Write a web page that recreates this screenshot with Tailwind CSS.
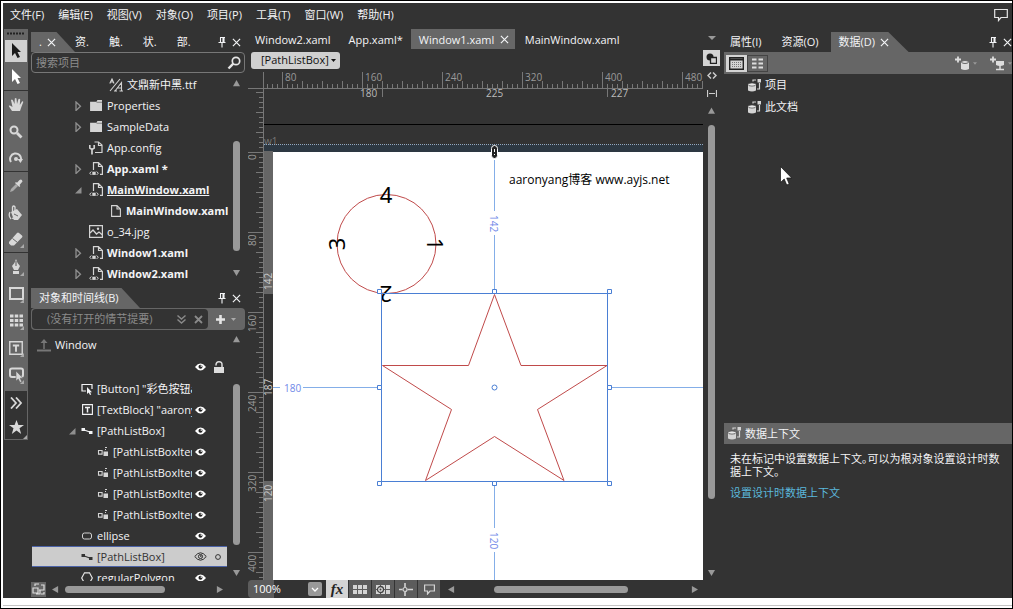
<!DOCTYPE html>
<html lang="zh-CN">
<head>
<meta charset="utf-8">
<title>Blend</title>
<script src="https://cdn.jsdelivr.net/npm/@tailwindcss/browser@4"></script>
</head>
<body class="h-screen overflow-hidden bg-black p-px font-['Open_Sans','Noto_Sans_CJK_SC',sans-serif] text-[11px] leading-4 text-gray-100">
<svg width="0" height="0" class="absolute" aria-hidden="true">
  <defs>
    <symbol id="x" viewBox="0 0 10 10"><path d="M1 1l8 8M9 1l-8 8" fill="none" stroke="currentColor" stroke-width="1.3"/></symbol>
    <symbol id="pin" viewBox="0 0 10 12"><path d="M3 1.5h5M3.5 1.5v5M7 1.5v5M6 1.5v5M1.5 6.5h7M5 6.5v5" fill="none" stroke="currentColor" stroke-width="1.1"/></symbol>
    <symbol id="up" viewBox="0 0 8 8"><path d="M4 0l4 7H0z" fill="currentColor"/></symbol>
    <symbol id="down" viewBox="0 0 8 8"><path d="M4 8l4-7H0z" fill="currentColor"/></symbol>
    <symbol id="left" viewBox="0 0 8 8"><path d="M0 4l7-4v8z" fill="currentColor"/></symbol>
    <symbol id="right" viewBox="0 0 8 8"><path d="M8 4L1 0v8z" fill="currentColor"/></symbol>
    <symbol id="closed" viewBox="0 0 8 10"><path d="M2 1v8.500L6.500 5.200z" fill="none" stroke="#8f8f8f" stroke-width="1.300"/></symbol>
    <symbol id="open" viewBox="0 0 8 8"><path d="M7.500 1v6.500H1z" fill="#8f8f8f"/></symbol>
    <symbol id="folder" viewBox="0 0 14 12"><path d="M0 2h7l1-2h5v12H0z" fill="#d4d4d4"/><path d="M7 2.5h6" stroke="#777"/></symbol>
    <symbol id="xaml" viewBox="0 0 14 14"><path d="M4.500 8V.6h5l3.900 3.900v7.900H11M9.500.600v3.900h3.900" fill="none" stroke="#d4d4d4" stroke-width="1.200"/><path d="M2.300 9.500L.7 11.200l1.600 1.700M7.700 9.500l1.600 1.700-1.600 1.700" fill="none" stroke="#d4d4d4"/><path d="M3.300 9.700h3.400v3.200H3.300z" fill="#d4d4d4"/></symbol>
    <symbol id="config" viewBox="0 0 14 14"><path d="M5.500 1h4l3.500 3v7.500H6M9.500 1v3.500H13" fill="none" stroke="#d4d4d4" stroke-width="1.2"/><path d="M.8 4v3l2.200 1.500L5.200 7V4M3 8v5.500" fill="none" stroke="#d4d4d4" stroke-width="1.7"/></symbol>
    <symbol id="page" viewBox="0 0 10 12"><path d="M.6.600h5.400l3.400 3.400v7.400H.6zM6 .6V4h3.400" fill="none" stroke="#d4d4d4" stroke-width="1.1"/></symbol>
    <symbol id="image" viewBox="0 0 14 13"><path d="M.6.600h12.800v11.800H.6z" fill="none" stroke="#d4d4d4" stroke-width="1.2"/><path d="M1 8l3-3 3.500 4L10 7l3.500 3" fill="none" stroke="#d4d4d4" stroke-width="1.3"/><circle cx="9" cy="3.800" r="1.200" fill="#d4d4d4"/></symbol>
    <symbol id="fontfile" viewBox="0 0 15 14"><path d="M1 13L11 1M.8 5.500L3 1l2 4.500M1.500 4h3M6 13l6.500-8.500V13M8 10h4.500M5 13h3M10.500 13H14" fill="none" stroke="#d4d4d4" stroke-width="1.1"/></symbol>
    <symbol id="eye" viewBox="0 0 12 8"><path d="M0 4Q6-3.500 12 4 6 11.500 0 4z" fill="#fff"/><circle cx="6" cy="3.800" r="2.200" fill="#222"/><circle cx="6.800" cy="3" r=".9" fill="#fff"/></symbol>
    <symbol id="eyeline" viewBox="0 0 14 9"><path d="M.8 4.500Q7-3.500 13.200 4.500 7 12.500.8 4.500z" fill="none" stroke="#222"/><circle cx="7" cy="4.500" r="2.200" fill="none" stroke="#222"/><circle cx="7.300" cy="4" r=".9" fill="#222"/></symbol>
    <symbol id="pathlist" viewBox="0 0 12 8"><path d="M2 2.500l8 3" stroke="currentColor" stroke-width="1.200"/><path d="M.5 1h3.500v3H.5zM8 4h3.500v3H8z" fill="currentColor"/></symbol>
    <symbol id="pathitem" viewBox="0 0 12 12"><path d="M1.500 4.500h3.600v3.600H1.500z" fill="none" stroke="#d4d4d4" stroke-width="1.100"/><path d="M6.500 5.500H11V10H6.500z" fill="#d4d4d4"/><path d="M8 1.500h2M8 3.500h1" stroke="#d4d4d4"/></symbol>
    <symbol id="btn" viewBox="0 0 12 12"><path d="M5 8H1V1.500h10V6" fill="none" stroke="currentColor" stroke-width="1.200"/><path d="M6 4v7l1.700-1.500L9 12l1.200-.6-1.100-2.200H11z" fill="currentColor"/></symbol>
    <symbol id="tb" viewBox="0 0 11 11"><path d="M.6.600h9.800v9.800H.6z" fill="none" stroke="currentColor" stroke-width="1.100"/><path d="M3 3.500h5M5.500 3.500v5" stroke="currentColor" stroke-width="1.500"/></symbol>
    <symbol id="db" viewBox="0 0 15 15"><path d="M1 6.500v6q4 2 8 0v-6z" fill="#d4d4d4"/><ellipse cx="5" cy="6.500" rx="4" ry="1.600" fill="#e8e8e8" stroke="#444" stroke-width=".7"/><path d="M6 3.500V2h3M12.500 5v6H10" fill="none" stroke="#d4d4d4" stroke-width="1.200"/><path d="M10.500 1H14v3.500h-3.500z" fill="#d4d4d4"/></symbol>
    <symbol id="corner" viewBox="0 0 4 4"><path d="M4 0v4H0z" fill="#aaa"/></symbol>
    <pattern id="ticks" x="14" y="0" width="20" height="20" patternUnits="userSpaceOnUse"><path d="M.5 11v7M5.500 14v4M10.500 14v4M15.500 14v4" stroke="#777"/></pattern>
    <pattern id="vticks" x="0" y="2" width="20" height="20" patternUnits="userSpaceOnUse"><path d="M8 .5h7M11 5.500h4M11 10.500h4M11 15.500h4" stroke="#777"/></pattern>
  </defs>
</svg>

<div class="flex h-full flex-col bg-white pl-[2px] pt-[2px]">
  <div class="flex min-h-0 flex-1 flex-col bg-[#333]">
    <header class="flex h-[26px] shrink-0 items-center justify-between pb-[2px] pl-[7px] pr-1">
      <nav class="flex gap-[14px] whitespace-nowrap" aria-label="主菜单">
        <button>文件(F)</button><button>编辑(E)</button><button>视图(V)</button><button>对象(O)</button><button>项目(P)</button><button>工具(T)</button><button>窗口(W)</button><button>帮助(H)</button>
      </nav>
      <button aria-label="反馈"><svg class="h-[14px] w-[14px]" viewBox="0 0 14 14"><path d="M.7 1.500h12.600v8H7l-2.500 3v-3H.7z" fill="none" stroke="#e5e5e5" stroke-width="1.200"/></svg></button>
    </header>

    <div class="flex min-h-0 flex-1">
      <!-- tools -->
      <aside class="ml-px mr-[3px] flex w-6 shrink-0 flex-col" aria-label="工具">
        <div class="flex h-2 items-center justify-center bg-[#666]"><svg class="h-[3px] w-[18px]" viewBox="0 0 18 3"><path d="M0 1.500h18" stroke="#222" stroke-width="2" stroke-dasharray="2 1"/></svg></div>
        <div class="flex flex-col bg-[#666] pb-[2px] text-[#d8d8d8] *:relative *:flex *:h-[27px] *:items-center *:justify-center">
          <button aria-label="选择"><span class="flex h-[22px] w-[22px] items-center justify-center bg-[#d0d0d0]"><svg class="h-4 w-3" viewBox="0 0 12 16"><path d="M2 0v13l3-3 2.500 5L10 14 7.500 9H11z" fill="#1a1a1a"/></svg></span></button>
          <button aria-label="直接选择" class="border-b border-[#333]"><svg class="h-4 w-3" viewBox="0 0 12 16"><path d="M2 0v13l3-3 2.500 5L10 14 7.500 9H11z" fill="#fff"/></svg></button>
          <button aria-label="平移"><svg class="h-[15px] w-4" viewBox="0 0 16 15"><path d="M4 14L1 9.500Q.3 8 2 8.500L4.500 10 3 3q1-1 2 .5L6.500 7 6.800 1.500q1-1 1.700 0L9 7l1.500-5q1-.6 1.700.3L11.800 8 14 4.500q1-.5 1.300.5L13 11l-1 3z" fill="currentColor"/></svg></button>
          <button aria-label="缩放"><svg class="h-[14px] w-[14px]" viewBox="0 0 14 14"><circle cx="5" cy="5" r="3.500" fill="none" stroke="currentColor" stroke-width="2"/><path d="M8 8l4.500 4.500" stroke="currentColor" stroke-width="2.800"/></svg></button>
          <button aria-label="旋转视图" class="border-b border-[#333]"><svg class="h-[14px] w-[14px]" viewBox="0 0 14 14"><path d="M2 11A5.500 5.500 0 1 1 12 9" fill="none" stroke="currentColor" stroke-width="2"/><path d="M8.500 8H14l-2.500 4z" fill="currentColor"/><circle cx="7" cy="8" r="2" fill="currentColor"/></svg></button>
          <button aria-label="吸管"><svg class="h-[14px] w-[14px]" viewBox="0 0 14 14"><path d="M1 13l1-3 5-5 2 2-5 5z" fill="#aaa"/><path d="M6 4l1-1 1 .8L10.500 1Q13-.3 13.500 2.500L10.500 6l.8 1-1 1z" fill="currentColor"/></svg></button>
          <button aria-label="油漆桶"><svg class="h-4 w-4" viewBox="0 0 16 16"><path d="M3 7l6-3 5 6-4 5H6z" fill="currentColor"/><path d="M7 7V2q-1.500-2-2.500 0v5M2 7q-2 4 1 7M4 13q4 2 7-1" fill="none" stroke="currentColor" stroke-width="1.300"/><path d="M6 9l4 2" stroke="#666"/></svg></button>
          <button aria-label="橡皮擦" class="border-b border-[#333]"><svg class="h-4 w-4" viewBox="0 0 16 16"><path d="M1 11l8-9q1-1 2 0l3 2.500q1 1 0 2L6 14.500H3L1 12.500z" fill="currentColor"/><path d="M4.500 7.500l5 4" stroke="#666"/></svg><svg class="absolute bottom-1 right-1 h-1 w-1"><use href="#corner"/></svg></button>
          <button aria-label="钢笔"><svg class="h-[15px] w-[12px]" viewBox="0 0 12 15"><path d="M6 0q1 4 4 7l-2 4H4L2 7Q5 4 6 0z" fill="currentColor"/><path d="M6 2v5" stroke="#555"/><path d="M3 12h6v3H3z" fill="currentColor"/></svg><svg class="absolute bottom-1 right-1 h-1 w-1"><use href="#corner"/></svg></button>
          <button aria-label="矩形"><svg class="h-[13px] w-[15px]" viewBox="0 0 15 13"><path d="M1 1h13v11H1z" fill="none" stroke="currentColor" stroke-width="2"/></svg><svg class="absolute bottom-1 right-1 h-1 w-1"><use href="#corner"/></svg></button>
          <button aria-label="网格"><svg class="h-[13px] w-[13px]" viewBox="0 0 13 13"><path d="M0 2h13M0 6.500h13M0 11h13" stroke="currentColor" stroke-width="3" stroke-dasharray="3.500 1.250"/></svg><svg class="absolute bottom-1 right-1 h-1 w-1"><use href="#corner"/></svg></button>
          <button aria-label="文本"><svg class="h-[14px] w-[14px]"><use href="#tb"/></svg><svg class="absolute bottom-1 right-1 h-1 w-1"><use href="#corner"/></svg></button>
          <button aria-label="按钮"><svg class="h-[16px] w-[15px]" viewBox="0 0 15 16"><rect x="1" y="1.500" width="13" height="8.500" rx="2" fill="none" stroke="currentColor" stroke-width="2"/><path d="M7 4v10l2.300-2 1.700 3.500 1.800-.8-1.600-3.500H14z" fill="currentColor" stroke="#666" stroke-width=".6"/></svg><svg class="absolute bottom-1 right-1 h-1 w-1"><use href="#corner"/></svg></button>
        </div>
        <div class="flex flex-col border border-[#666] text-[#d8d8d8] *:relative *:flex *:h-[24px] *:items-center *:justify-center">
          <button aria-label="资产"><svg class="h-3 w-3" viewBox="0 0 12 12"><path d="M1 .5L6 6l-5 5.500M6 .5L11 6l-5 5.500" fill="none" stroke="currentColor" stroke-width="1.800"/></svg></button>
          <button aria-label="收藏"><svg class="h-[14px] w-[15px]" viewBox="0 0 15 14"><path d="M7.500 0l1.900 5H15l-4.500 3.300L12.200 14 7.500 10.600 2.800 14l1.700-5.700L0 5h5.600z" fill="currentColor"/></svg><svg class="absolute bottom-0 right-0 h-1 w-1"><use href="#corner"/></svg></button>
        </div>
      </aside>

      <!-- projects and objects -->
      <section class="flex w-[214px] shrink-0 flex-col">
        <div class="flex h-[23px] items-end justify-between pr-1">
          <div class="flex h-5 items-center">
            <div class="flex h-5 w-[44px] items-center gap-[5px] bg-[#666] pl-2 [clip-path:polygon(0_0,58%_0,100%_100%,0_100%)]"><button>.</button><button aria-label="关闭"><svg class="h-[9px] w-[9px]"><use href="#x"/></svg></button></div>
            <div class="flex gap-5"><button>资.</button><button>触.</button><button>状.</button><button>部.</button></div>
          </div>
          <div class="flex h-5 items-center gap-[5px]"><button aria-label="固定"><svg class="h-3 w-[10px]"><use href="#pin"/></svg></button><button aria-label="关闭面板"><svg class="h-[9px] w-[9px]"><use href="#x"/></svg></button></div>
        </div>
        <label class="flex h-[21px] items-center rounded-sm border border-[#777] px-1 pr-[3px]">
          <input type="text" aria-label="搜索项目" placeholder="搜索项目" class="min-w-0 flex-1 bg-transparent outline-none placeholder:text-[#8c8c8c]">
          <svg class="h-[14px] w-[14px]" viewBox="0 0 14 14"><circle cx="9" cy="5" r="3.700" fill="none" stroke="#e5e5e5" stroke-width="1.700"/><path d="M6.300 7.700L1.500 12.500" stroke="#e5e5e5" stroke-width="2.400"/></svg>
        </label>
        <div class="flex pt-px">
          <ul class="min-w-0 flex-1 whitespace-nowrap *:flex *:h-[21px] *:items-center">
            <li class="pl-[78px]"><svg class="mr-[3px] h-[14px] w-[15px] shrink-0"><use href="#fontfile"/></svg>文鼎新中黑.ttf</li>
            <li class="pl-[43px]"><svg class="mr-2 h-[10px] w-2 shrink-0"><use href="#closed"/></svg><svg class="mr-1 h-[11px] w-[13px] shrink-0"><use href="#folder"/></svg>Properties</li>
            <li class="pl-[43px]"><svg class="mr-2 h-[10px] w-2 shrink-0"><use href="#closed"/></svg><svg class="mr-1 h-[11px] w-[13px] shrink-0"><use href="#folder"/></svg>SampleData</li>
            <li class="pl-[58px]"><svg class="mr-1 h-[14px] w-[14px] shrink-0"><use href="#config"/></svg>App.config</li>
            <li class="pl-[43px] font-bold"><svg class="mr-[7px] h-[10px] w-2 shrink-0"><use href="#closed"/></svg><svg class="mr-1 h-[14px] w-[14px] shrink-0"><use href="#xaml"/></svg>App.xaml *</li>
            <li class="pl-[43px] font-bold"><svg class="mr-[7px] h-2 w-2 shrink-0"><use href="#open"/></svg><svg class="mr-1 h-[14px] w-[14px] shrink-0"><use href="#xaml"/></svg><span class="underline">MainWindow.xaml</span></li>
            <li class="pl-[80px] font-bold"><svg class="mr-[5px] h-3 w-[10px] shrink-0"><use href="#page"/></svg>MainWindow.xaml</li>
            <li class="pl-[58px]"><svg class="mr-1 h-[13px] w-[14px] shrink-0"><use href="#image"/></svg>o_34.jpg</li>
            <li class="pl-[43px] font-bold"><svg class="mr-[7px] h-[10px] w-2 shrink-0"><use href="#closed"/></svg><svg class="mr-1 h-[14px] w-[14px] shrink-0"><use href="#xaml"/></svg>Window1.xaml</li>
            <li class="pl-[43px] font-bold"><svg class="mr-[7px] h-[10px] w-2 shrink-0"><use href="#closed"/></svg><svg class="mr-1 h-[14px] w-[14px] shrink-0"><use href="#xaml"/></svg>Window2.xaml</li>
          </ul>
          <div class="flex w-[17px] flex-col items-center pb-2 pt-[6px] text-[#999]">
            <svg class="h-[7px] w-[7px]"><use href="#up"/></svg>
            <div class="mt-[54px] h-[110px] w-[7px] rounded-full bg-[#999]"></div>
            <svg class="mt-auto h-[7px] w-[7px]"><use href="#down"/></svg>
          </div>
        </div>

        <div class="mt-1 flex h-5 shrink-0 items-center justify-between pr-1">
          <button class="h-5 w-[109px] bg-[#666] pl-2 text-left [clip-path:polygon(0_0,83%_0,100%_100%,0_100%)]">对象和时间线(B)</button>
          <div class="flex items-center gap-[5px]"><button aria-label="固定"><svg class="h-3 w-[10px]"><use href="#pin"/></svg></button><button aria-label="关闭面板"><svg class="h-[9px] w-[9px]"><use href="#x"/></svg></button></div>
        </div>
        <div class="flex h-[22px] shrink-0 items-stretch rounded-sm bg-[#666] p-px text-[#8a8a8a]">
          <div class="flex flex-1 items-center rounded-sm bg-[#333] pl-[15px]">
            <span class="flex-1">(没有打开的情节提要)</span>
            <button aria-label="展开"><svg class="mr-2 h-[9px] w-[9px]" viewBox="0 0 9 9"><path d="M.5.500l4 3.500 4-3.500M.5 4.500l4 3.500 4-3.500" fill="none" stroke="currentColor" stroke-width="1.400"/></svg></button>
            <button aria-label="关闭情节提要"><svg class="mr-[5px] h-[9px] w-[9px]" viewBox="0 0 9 9"><path d="M1 1l7 7M8 1L1 8" stroke="currentColor" stroke-width="1.800"/></svg></button>
          </div>
          <button aria-label="新建" class="flex w-9 items-center justify-center gap-[6px]"><svg class="h-[9px] w-[9px]" viewBox="0 0 9 9"><path d="M4.500 0v9M0 4.500h9" stroke="#e5e5e5" stroke-width="2.600"/></svg><svg class="h-[3px] w-[5px]" viewBox="0 0 5 3"><path d="M0 0h5L2.500 3z" fill="#aaa"/></svg></button>
        </div>

        <div class="flex min-h-0 flex-1">
          <div class="min-w-0 flex-1 overflow-hidden">
            <div class="flex h-[26px] items-center gap-1 pl-[6px] pt-1"><svg class="h-[13px] w-[14px]" viewBox="0 0 14 13"><path d="M0 11.500h14" stroke="#777" stroke-width="2"/><path d="M7 10V3" stroke="#777" stroke-width="1.500"/><path d="M7 0L3.500 4h7z" fill="#777"/></svg>Window</div>
            <div class="flex h-[22px] items-center justify-end gap-2 pr-[3px]"><svg class="h-2 w-[11px]"><use href="#eye"/></svg><svg class="h-3 w-[10px]" viewBox="0 0 10 12"><path d="M0 6h10v6H0z" fill="#ddd"/><path d="M2 4.500Q1.800.8 5 .8T8 4v2" fill="none" stroke="#ddd" stroke-width="1.500"/></svg></div>
            <ul class="whitespace-nowrap *:flex *:h-[21px] *:items-center">
              <li class="pl-[50px]"><svg class="mr-1 h-3 w-3 shrink-0"><use href="#btn"/></svg><span class="w-[95px] overflow-hidden">[Button] "彩色按钮a</span></li>
              <li class="pl-[51px]"><svg class="mr-1 h-[11px] w-[11px] shrink-0"><use href="#tb"/></svg><span class="mr-[3px] w-[95px] overflow-hidden">[TextBlock] "aarony</span><svg class="h-2 w-[11px] shrink-0"><use href="#eye"/></svg></li>
              <li class="pl-[37px]"><svg class="mr-[5px] h-2 w-2 shrink-0"><use href="#open"/></svg><svg class="mr-1 h-2 w-3 shrink-0"><use href="#pathlist"/></svg><span class="mr-[3px] w-[95px] overflow-hidden">[PathListBox]</span><svg class="h-2 w-[11px] shrink-0"><use href="#eye"/></svg></li>
              <li class="pl-[66px]"><svg class="mr-1 h-3 w-3 shrink-0"><use href="#pathitem"/></svg><span class="mr-[3px] w-[79px] overflow-hidden">[PathListBoxItem]</span><svg class="h-2 w-[11px] shrink-0"><use href="#eye"/></svg></li>
              <li class="pl-[66px]"><svg class="mr-1 h-3 w-3 shrink-0"><use href="#pathitem"/></svg><span class="mr-[3px] w-[79px] overflow-hidden">[PathListBoxItem]</span><svg class="h-2 w-[11px] shrink-0"><use href="#eye"/></svg></li>
              <li class="pl-[66px]"><svg class="mr-1 h-3 w-3 shrink-0"><use href="#pathitem"/></svg><span class="mr-[3px] w-[79px] overflow-hidden">[PathListBoxItem]</span><svg class="h-2 w-[11px] shrink-0"><use href="#eye"/></svg></li>
              <li class="pl-[66px]"><svg class="mr-1 h-3 w-3 shrink-0"><use href="#pathitem"/></svg><span class="mr-[3px] w-[79px] overflow-hidden">[PathListBoxItem]</span><svg class="h-2 w-[11px] shrink-0"><use href="#eye"/></svg></li>
              <li class="pl-[50px]"><svg class="mr-1 h-2 w-3 shrink-0" viewBox="0 0 12 8"><rect x="1.500" y="1" width="9" height="6" rx="2" fill="none" stroke="#d4d4d4"/></svg><span class="mr-[3px] w-[95px] overflow-hidden">ellipse</span><svg class="h-2 w-[11px] shrink-0"><use href="#eye"/></svg></li>
              <li class="ml-px border-y border-[#4c63a8] bg-[#ccc] pl-[49px] text-[#333]"><svg class="mr-1 h-2 w-3 shrink-0"><use href="#pathlist"/></svg><span class="mr-[2px] w-[95px] overflow-hidden">[PathListBox]</span><svg class="mr-2 h-[9px] w-[13px] shrink-0"><use href="#eyeline"/></svg><svg class="h-[6px] w-[6px]" viewBox="0 0 6 6"><circle cx="3" cy="3" r="2.400" fill="none" stroke="#333"/></svg></li>
              <li class="pl-[50px]"><svg class="mr-1 h-3 w-3 shrink-0" viewBox="0 0 12 12"><path d="M3.500.800h5L11.300 6l-2.800 5.200h-5L.7 6z" fill="none" stroke="#e5e5e5" stroke-width="1.200"/></svg><span class="mr-[3px] w-[95px] overflow-hidden">regularPolygon</span><svg class="h-2 w-[11px] shrink-0"><use href="#eye"/></svg></li>
            </ul>
          </div>
          <div class="flex w-[18px] shrink-0 flex-col items-center pb-[5px] pt-[6px] text-[#999]">
            <svg class="h-[7px] w-[7px]"><use href="#up"/></svg>
            <div class="mt-[41px] h-[161px] w-[7px] rounded-full bg-[#999]"></div>
            <svg class="mt-auto h-[7px] w-[7px]"><use href="#down"/></svg>
          </div>
        </div>
        <div class="flex h-[17px] shrink-0 items-center text-[#999]">
          <button aria-label="视图选项" class="flex h-[15px] w-[15px] items-center justify-center bg-[#666]"><svg class="h-[13px] w-[13px]" viewBox="0 0 13 13"><path d="M1 5h5v5H1zM3 3V1h4M9 2h3v5H7M8 7v4H4M9 11h3V9" fill="none" stroke="#ddd" stroke-width="1.200"/></svg></button>
          <svg class="ml-[6px] h-[7px] w-[7px]"><use href="#left"/></svg>
          <div class="ml-[6px] h-[7px] w-[100px] rounded-full bg-[#999]"></div>
          <svg class="ml-auto mr-[22px] h-[7px] w-[7px]"><use href="#right"/></svg>
        </div>
      </section>

      <!-- artboard -->
      <main class="ml-[3px] flex min-w-0 flex-1">
        <div class="flex min-w-0 flex-1 flex-col">
          <div class="flex h-[21px] shrink-0 items-start whitespace-nowrap pl-[7px] *:h-5">
            <button class="mr-[18px] pt-px">Window2.xaml</button><button class="mr-2 pt-px">App.xaml*</button>
            <div class="mr-[10px] flex w-[104px] items-center justify-between bg-[#676767] px-2 pr-[6px] pt-px"><button>Window1.xaml</button><button aria-label="关闭"><svg class="h-[9px] w-[9px]"><use href="#x"/></svg></button></div>
            <button class="pt-px">MainWindow.xaml</button>
          </div>
          <div class="flex h-5 shrink-0 items-center pl-[3px]">
            <div class="relative h-[17px] w-[89px]">
              <select aria-label="选定对象" class="h-full w-full appearance-none rounded-[3px] bg-[#d0d0d0] pl-[10px] text-[#111]"><option>[PathListBox]</option></select>
              <svg class="pointer-events-none absolute right-1 top-[7px] h-[3px] w-[5px]" viewBox="0 0 5 3"><path d="M0 0h5L2.500 3z" fill="#111"/></svg>
            </div>
          </div>
          <div class="min-h-0 flex-1 overflow-hidden">
            <svg class="block h-full w-[1600px]" role="img" aria-label="画板">
              <!-- rulers -->
              <rect x="16" width="1584" height="19" fill="url(#ticks)"/>
              <path d="M0 18.500h1600" stroke="#777"/>
              <g fill="none" stroke="#777"><path d="M34.500 2v16M114.500 2v16M194.500 2v16M274.500 2v16M354.500 2v16M434.500 2v16M15.500 2v600"/></g>
              <rect y="21" width="16" height="500" fill="url(#vticks)"/>
              <path d="M0 82.500h16M0 162.500h16M0 242.500h16M0 322.500h16M0 402.500h16M0 482.500h16" stroke="#777"/>
              <g fill="#999" font-size="10"><text x="37" y="11">80</text><text x="117" y="11">160</text><text x="197" y="11">240</text><text x="277" y="11">320</text><text x="357" y="11">400</text><text x="437" y="11">480</text>
                <text transform="translate(8 90)rotate(-90)">0</text><text transform="translate(8 176)rotate(-90)">80</text><text transform="translate(8 262)rotate(-90)">160</text><text transform="translate(8 342)rotate(-90)">240</text><text transform="translate(8 422)rotate(-90)">320</text><text transform="translate(8 502)rotate(-90)">400</text></g>
              <path d="M134.500 19v8M359.500 19v8" stroke="#777"/>
              <g fill="#bbb" font-size="10"><text x="112" y="27">180</text><text x="238" y="27">225</text><text x="363" y="27">227</text></g>
              <!-- window frame -->
              <path d="M16 54.500h1600" stroke="#000"/>
              <text x="16" y="75" font-size="10" fill="#777">w1</text>
              <rect x="16" y="75" width="1600" height="7" fill="#2d3842"/>
              <path d="M16 74.500h1600" stroke="#8fa9c4" stroke-dasharray="1 1"/>
              <rect x="25" y="82" width="1600" height="800" fill="#fff"/>
              <rect x="16" y="81" width="9" height="143" fill="#666"/><rect x="16" y="411" width="9" height="400" fill="#666"/>
              <g fill="#ccc" font-size="10"><text transform="translate(24 220)rotate(-90)">142</text><text transform="translate(24 326)rotate(-90)">187</text><text transform="translate(24 432)rotate(-90)">120</text></g>
              <!-- shapes -->
              <g fill="none" stroke="#c04a4a"><circle cx="138.500" cy="174" r="49.500"/><path d="M246.500 224.500L273 295.500h86L289.500 339.500 316 410.500 246.500 366.500 177.500 410.500 203.500 339.500 134.500 295.500h86z"/></g>
              <g fill="#000" font-size="22" font-family="Noto Sans, sans-serif" text-anchor="middle"><text x="138" y="133">4</text><text transform="translate(179 174)rotate(90)">1</text><text transform="translate(138 216)rotate(180)">2</text><text transform="translate(97 174)rotate(-90)">3</text></g>
              <text x="261" y="114" font-size="12" fill="#000">aaronyang博客 www.ayjs.net</text>
              <!-- selection -->
              <rect x="133.500" y="223.500" width="226" height="188" fill="none" stroke="#4a7fd4"/>
              <path d="M246.500 90v51M246.500 165v54M246.500 415v43M246.500 482v400M25 317.500h7M55 317.500h74M364 317.500h1200" stroke="#84aee8"/>
              <g fill="#fff" stroke="#4a7fd4"><path d="M129.500 219.500h4v4h-4zM244.500 219.500h4v4h-4zM359.500 219.500h4v4h-4zM129.500 315.500h4v4h-4zM359.500 315.500h4v4h-4zM129.500 411.500h4v4h-4zM244.500 411.500h4v4h-4zM359.500 411.500h4v4h-4z"/><circle cx="246.500" cy="317.500" r="2.500"/></g>
              <g fill="#6f88e8" font-size="10"><text x="36" y="322">180</text><text transform="translate(242 145)rotate(90)">142</text><text transform="translate(242 462)rotate(90)">120</text></g>
              <rect x="243.500" y="75.500" width="6" height="13" rx="3" fill="#222" stroke="#fff"/><path d="M246.500 79v3M246.500 84v1" stroke="#fff"/>
            </svg>
          </div>
          <!-- artboard status bar -->
          <div class="flex h-[18px] shrink-0 items-stretch text-[#d4d4d4]">
            <div class="relative mr-1 w-[74px]">
              <select aria-label="缩放比例" class="h-full w-full appearance-none rounded-sm bg-linear-to-r from-[#5c5c5c] from-35% to-[#333] to-35% pl-[5px] text-white outline-none"><option>100%</option></select>
              <svg class="pointer-events-none absolute right-0 top-[2px] h-[14px] w-[14px]" viewBox="0 0 14 14"><rect width="14" height="14" rx="2" fill="#999"/><path d="M4 6l3 3 3-3" fill="none" stroke="#fff" stroke-width="1.300"/></svg>
            </div>
            <button aria-label="效果" class="mr-px flex w-[22px] items-center justify-center bg-[#d4d4d4] font-['Liberation_Serif',serif] text-[15px] font-bold italic text-[#222]">fx</button>
            <div class="mr-2 flex gap-px *:flex *:w-[22px] *:items-center *:justify-center *:bg-[#5c5c5c]">
              <button aria-label="显示网格"><svg class="h-[9px] w-[14px]" viewBox="0 0 14 9"><path d="M0 2h14M0 7h14" stroke="currentColor" stroke-width="4" stroke-dasharray="4 1"/></svg></button>
              <button aria-label="对齐网格"><svg class="h-[9px] w-[14px]" viewBox="0 0 14 9"><path d="M0 2h14M0 7h14" stroke="currentColor" stroke-width="4" stroke-dasharray="4 1"/><circle cx="4.500" cy="4.500" r="3" fill="#ddd" stroke="#444" stroke-width="1.300"/><circle cx="4.500" cy="4.500" r="1" fill="#444"/></svg></button>
              <button aria-label="对齐线"><svg class="h-[13px] w-[14px]" viewBox="0 0 14 13"><path d="M0 6.500h3.500M8.500 6.500H14M6 0v4M6 9v4" stroke="currentColor" stroke-width="1.600"/><circle cx="6" cy="6.500" r="2" fill="none" stroke="currentColor" stroke-width="1.200"/></svg></button>
              <button aria-label="显示注释"><svg class="h-[11px] w-[11px]" viewBox="0 0 11 11"><path d="M.6 1h9.800v6H6l-2.500 3V7H.6z" fill="none" stroke="currentColor" stroke-width="1.200"/></svg></button>
            </div>
            <div class="flex flex-1 items-center pr-[5px] text-[#999]">
              <svg class="h-[7px] w-[7px] shrink-0"><use href="#left"/></svg>
              <div class="ml-[39px] h-[7px] w-[134px] rounded-full bg-[#999]"></div>
              <svg class="ml-auto h-[7px] w-[7px] shrink-0"><use href="#right"/></svg>
            </div>
          </div>
        </div>
        <div class="flex w-[17px] shrink-0 flex-col items-center text-[#ccc]">
          <svg class="mt-[7px] h-1 w-2" viewBox="0 0 8 4"><path d="M0 0h8L4 4z" fill="#999"/></svg>
          <button aria-label="设计" class="mt-[10px] flex h-4 w-[17px] items-center justify-center bg-[#d4d4d4]"><svg class="h-[11px] w-[11px]" viewBox="0 0 11 11"><circle cx="4" cy="4" r="3.500" fill="#222"/><path d="M4.500 4.500h6v6h-6z" fill="#d4d4d4" stroke="#222" stroke-width="1.300"/></svg></button>
          <button aria-label="XAML" class="mt-[6px]"><svg class="block h-[7px] w-[10px]" viewBox="0 0 10 7"><path d="M4 .5l-3 3 3 3M6 .5l3 3-3 3" fill="none" stroke="currentColor" stroke-width="1.500"/></svg></button>
          <button aria-label="拆分" class="mt-[11px]"><svg class="block h-[7px] w-[10px]" viewBox="0 0 10 7"><path d="M.5 0v7M9.500 0v7M2 3.500h6" stroke="currentColor" stroke-width="1.200"/></svg></button>
          <svg class="mt-[10px] h-2 w-[7px] text-[#999]"><use href="#up"/></svg>
          <div class="mt-[10px] h-[374px] w-[7px] rounded-full bg-[#999]"></div>
          <svg class="mb-[22px] mt-auto h-[7px] w-[7px] text-[#999]"><use href="#down"/></svg>
        </div>
      </main>

      <!-- data panel -->
      <section class="ml-1 flex w-[288px] shrink-0 flex-col">
        <div class="flex h-[23px] items-end whitespace-nowrap pl-[6px] *:h-5">
          <button class="mr-5">属性(I)</button><button class="mr-3">资源(O)</button>
          <div class="flex w-[78px] items-center gap-[5px] bg-[#666] pl-2 [clip-path:polygon(0_0,74%_0,100%_100%,0_100%)]"><button>数据(D)</button><button aria-label="关闭"><svg class="h-[9px] w-[9px]"><use href="#x"/></svg></button></div>
          <div class="ml-auto flex items-center gap-[5px]"><button aria-label="固定"><svg class="h-3 w-[10px]"><use href="#pin"/></svg></button><button aria-label="关闭面板"><svg class="h-[9px] w-[9px]"><use href="#x"/></svg></button></div>
        </div>
        <div class="flex h-[22px] shrink-0 items-center bg-[#666] pl-[2px]">
          <button aria-label="列表模式" class="flex h-[17px] w-[21px] items-center justify-center bg-[#d4d4d4]"><svg class="h-[13px] w-[15px]" viewBox="0 0 15 13"><path d="M.7.700h13.600v11.600H.7z" fill="none" stroke="#222" stroke-width="1.400"/><path d="M1 2.500h13" stroke="#222" stroke-width="2"/><path d="M3 5.500h9M3 7.500h9M3 9.500h9" stroke="#777" stroke-dasharray="1 1"/></svg></button>
          <button aria-label="详细信息模式" class="flex h-[17px] w-[21px] items-center justify-center border border-[#444]"><svg class="h-[11px] w-[11px]" viewBox="0 0 11 11"><path d="M0 1.500h11M0 5.500h11M0 9.500h11" stroke="#ddd" stroke-width="2" stroke-dasharray="4.500 2"/></svg></button>
          <div class="ml-auto flex items-center gap-[13px]">
            <button aria-label="创建示例数据" class="flex items-center gap-[2px]"><svg class="h-[15px] w-4" viewBox="0 0 16 15"><path d="M0 3.500h6M3 .5v6" stroke="#ddd" stroke-width="1.800"/><path d="M6 6v7q4 2 8 0V6z" fill="#ddd"/><ellipse cx="10" cy="6" rx="3.500" ry="1.500" fill="#ddd" stroke="#666"/></svg><svg class="h-[3px] w-1" viewBox="0 0 5 3"><path d="M0 0h5L2.500 3z" fill="#999"/></svg></button>
            <button aria-label="创建数据源" class="flex items-center gap-[2px]"><svg class="h-[15px] w-4" viewBox="0 0 16 15"><path d="M0 3.500h6M3 .5v6" stroke="#ddd" stroke-width="1.800"/><path d="M6 5v4q4 2 8 0V5z" fill="#ddd"/><path d="M10 9v5M6 13.500h8" stroke="#ddd" stroke-width="1.500"/></svg><svg class="h-[3px] w-1" viewBox="0 0 5 3"><path d="M0 0h5L2.500 3z" fill="#999"/></svg></button>
          </div>
        </div>
        <ul class="relative pl-[23px] *:flex *:h-[22px] *:items-center *:gap-[3px]">
          <li><svg class="h-[15px] w-[15px]"><use href="#db"/></svg>项目</li>
          <li><svg class="h-[15px] w-[15px]"><use href="#db"/></svg>此文档</li>
          <!-- mouse pointer -->
          <li class="absolute left-[56px] top-[91px]" aria-hidden="true"><svg class="h-5 w-3" viewBox="0 0 12 20"><path d="M.5.500v16l3.700-3.500 2.500 6 2.500-1-2.500-6h5z" fill="#fff" stroke="#111" stroke-width=".7"/></svg></li>
        </ul>
        <div class="mt-auto pb-[97px]">
          <h2 class="flex h-[21px] items-center gap-[3px] bg-[#666] pl-[3px]"><svg class="h-[15px] w-[15px]"><use href="#db"/></svg>数据上下文</h2>
          <p class="px-[6px] pt-2 leading-[13px]">未在标记中设置数据上下文｡可以为根对象设置设计时数据上下文。</p>
          <a href="#" class="mt-[7px] block pl-[6px] text-[#5bb8dc]">设置设计时数据上下文</a>
        </div>
      </section>
    </div>
  </div>
  <footer class="flex h-[10px] shrink-0 flex-col justify-end pb-[2px]"><div class="h-px bg-[#c4c4c4]"></div></footer>
</div>
</body>
</html>
